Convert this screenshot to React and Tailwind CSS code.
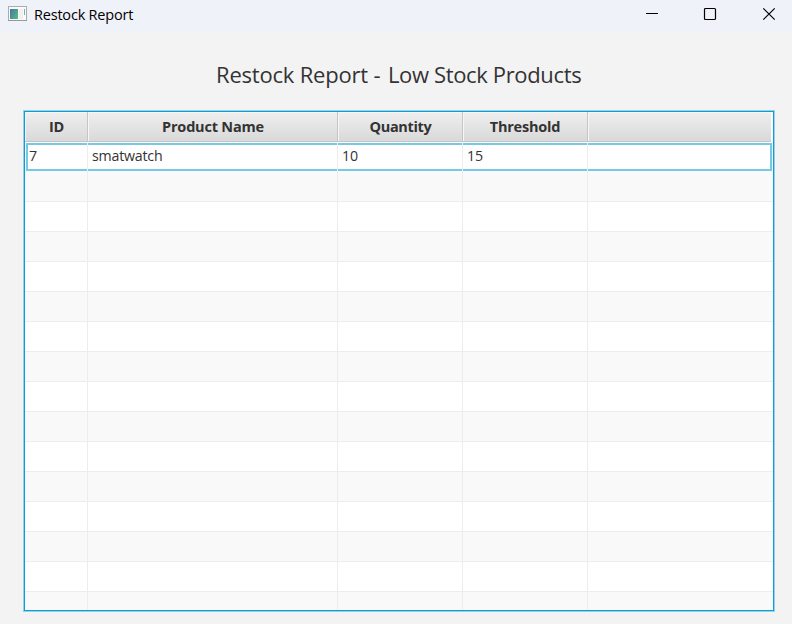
const columns = [
  { label: 'ID', value: '7', width: 'w-[63px]', cell: 'pl-1', header: 'pl-px tracking-[-0.2px]' },
  { label: 'Product Name', value: 'smatwatch', width: 'w-[250px]', cell: 'pl-1', header: 'pl-px tracking-[-0.2px]' },
  { label: 'Quantity', value: '10', width: 'w-[125px]', cell: 'pl-1', header: 'pl-px tracking-[-0.35px]' },
  { label: 'Threshold', value: '15', width: 'w-[125px]', cell: 'pl-1', header: 'tracking-[-0.2px]' },
];
const emptyRows = Array.from({ length: 15 }, (_, i) => i);

function TitleBar() {
  return (
    <header className="flex h-[33px] shrink-0 items-start bg-[#f0f2f9] text-black">
      <svg className="ml-2 mt-[6px]" width="19" height="16" viewBox="0 0 19 16">
        <defs>
          <linearGradient id="pane" x1="0" y1="0" x2="1" y2="0.6">
            <stop offset="0" stopColor="#4277a8" />
            <stop offset="1" stopColor="#58b283" />
          </linearGradient>
        </defs>
        <rect x="0.5" y="0.5" width="18" height="14" fill="#fafafa" stroke="#a9adb0" />
        <path d="M0 14.5H19" stroke="#96999c" />
        <rect x="2" y="3" width="8" height="10" fill="url(#pane)" />
        <rect x="11" y="3" width="4" height="10" fill="#f0f0f0" />
        <path d="M16.5 3V9" stroke="#6fb9a4" />
      </svg>
      <h1 className="ml-[7px] mt-[5px] whitespace-nowrap font-['Open_Sans',sans-serif] text-[14.5px] leading-5 tracking-[-0.2px]">Restock Report</h1>
      <div className="ml-auto mr-4 mt-[7px] flex">
        <svg className="mr-11" width="14" height="14" viewBox="0 0 14 14"><path d="M1 6.5H13" stroke="#000" /></svg>
        <svg className="mr-[45px]" width="14" height="14" viewBox="0 0 14 14"><rect x="1.5" y="1.5" width="11" height="11" rx="1" fill="none" stroke="#000" strokeWidth="1.2" /></svg>
        <svg width="14" height="14" viewBox="0 0 14 14"><path d="M1.3 1.3L12.7 12.7M12.7 1.3L1.3 12.7" stroke="#000" strokeWidth="1.2" /></svg>
      </div>
    </header>
  );
}

export default function App() {
  return (
    <div className="flex h-[624px] w-[792px] flex-col overflow-hidden bg-[#f3f3f3] font-['Open_Sans','Noto_Sans',sans-serif] text-[#333]">
      <TitleBar />
      <h2 className="ml-[216px] mt-[25px] whitespace-nowrap text-[22px] leading-8 tracking-[-0.2px]">
        Restock Report <span className="mr-[2px]">-</span> <span className="tracking-[-0.35px]">Low Stock Products</span>
      </h2>
      <main className="ml-6 mt-[21px] flex h-[500px] w-[750px] shrink-0 flex-col overflow-hidden border border-[#109bd2] bg-white shadow-[0_0_0_1px_#93d3ea]">
        <div className="flex h-[31px] shrink-0 border-b border-white">
          {columns.map((c) => (
            <div key={c.label} className={`${c.width} ${c.header} flex h-[30px] shrink-0 items-center justify-center border-b border-r border-[#c5c5c5] bg-linear-to-b from-[#efefef] to-[#d9d9d9] text-[14.5px] font-bold shadow-[inset_1px_1px_0_#f6f6f6]`}>{c.label}</div>
          ))}
          <div className="mr-[2px] h-[30px] flex-1 border-b border-[#c5c5c5] bg-linear-to-b from-[#efefef] to-[#d9d9d9] shadow-[inset_1px_1px_0_#f6f6f6]" />
        </div>
        <div className="ml-px mr-px flex h-7 shrink-0 border-2 border-[#76c8e4] bg-white">
          {columns.map((c, i) => (
            <div key={c.label} className={`${i === 0 ? 'w-[60px] pl-px' : `${c.width} ${c.cell}`} -my-[2px] shrink-0 border-r border-[#ededed] text-[14.2px] leading-[26px] tracking-[-0.2px]`}>{c.value}</div>
          ))}
        </div>
        {emptyRows.map((i) => (
          <div key={i} className={`flex shrink-0 border-b border-[#ededed] ${i === 0 ? 'h-[31px]' : 'h-[30px]'} ${i % 2 ? 'bg-white' : 'bg-[#f9f9f9]'}`}>
            {columns.map((c) => <div key={c.label} className={`${c.width} shrink-0 border-r border-[#ededed]`} />)}
          </div>
        ))}
      </main>
    </div>
  );
}
